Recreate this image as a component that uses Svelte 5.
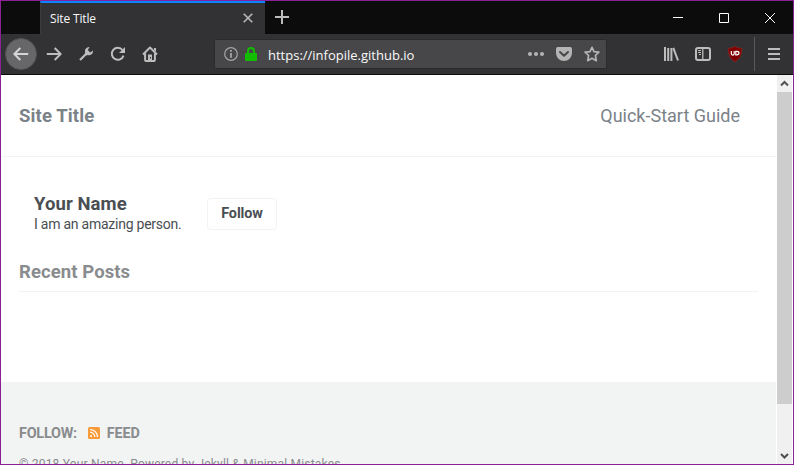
<script>
  const siteTitle = 'Site Title';
  const url = 'https://infopile.github.io';
</script>

<div class="window">
  <div class="tabs">
    <div class="tab"><span>{siteTitle}</span>
      <svg class="close" width="10" height="10" viewBox="0 0 10 10"><path d="M.7.7l8.6 8.6M9.3.7L.7 9.3" stroke="#b8b8b8" stroke-width="1.6" /></svg>
    </div>
    <svg class="plus" width="14" height="14" viewBox="0 0 14 14"><path d="M7 0v14M0 7h14" stroke="#bcbcbc" stroke-width="2" /></svg>
    <div class="controls">
      <svg width="10" height="10" viewBox="0 0 10 10"><path d="M0 4.5h10" stroke="#fff" /></svg>
      <svg width="10" height="10" viewBox="0 0 10 10"><path d="M.5.5h9v9h-9z" fill="none" stroke="#fff" /></svg>
      <svg width="10" height="10" viewBox="0 0 10 10"><path d="M0 0l10 10M10 0L0 10" stroke="#fff" /></svg>
    </div>
  </div>

  <div class="toolbar">
    <div class="back"><svg width="16" height="16" viewBox="0 0 16 16"><path d="M15.2 8H1.5M7.3 2L1.3 8l6 6" /></svg></div>
    <div class="nav">
      <svg width="16" height="16" viewBox="0 0 16 16"><path d="M.8 8h13.7M8.7 2l6 6-6 6" /></svg>
      <svg width="16" height="16" viewBox="0 0 16 16"><path d="M2 14l6.3-6.3" stroke-width="2.2" /><path d="M11.6 1.1A4.2 4.2 0 0 0 7.1 6.5L6.7 8l1.5 1.5 1.4-.5A4.2 4.2 0 0 0 15 4.4l-2.8 2L9.8 4z" fill="#bdbdbd" stroke="none" /></svg>
      <svg width="16" height="16" viewBox="0 0 16 16"><path d="M13.5 9.6A6 6 0 1 1 12.5 4" /><path d="M15 1v6H9z" fill="#bdbdbd" stroke="none" /></svg>
      <svg width="16" height="16" viewBox="0 0 16 16"><path d="M1 8.5l7-7 7 7M3.1 7.5V14a1 1 0 0 0 1 1h7.8a1 1 0 0 0 1-1V7.5" stroke-linejoin="round" /><path d="M12 2h2v4l-2-2zM6 8.5h4V15H6z" fill="#bdbdbd" stroke="none" /><path d="M8.5 11v1.5" stroke="#323234" stroke-width="1" /></svg>
    </div>
    <div class="address">
      <svg width="14" height="14" viewBox="0 0 14 14"><circle cx="7" cy="7" r="6.3" fill="none" stroke="#a5a5a6" stroke-width="1.2" /><path d="M7 6v4.8M7 3v1.8" stroke="#a5a5a6" stroke-width="1.8" /></svg>
      <svg class="lock" width="12" height="14" viewBox="0 0 12 14"><path d="M3 7V4a3 3 0 0 1 6 0v3" fill="none" stroke="#12bc00" stroke-width="2" /><rect y="6" width="12" height="8" rx="1" fill="#12bc00" /></svg>
      <span class="url">{url}</span>
      <svg class="dots" width="16" height="16" viewBox="0 0 16 16" fill="#b4b4b5"><circle cx="2" cy="8" r="2" /><circle cx="8" cy="8" r="2" /><circle cx="14" cy="8" r="2" /></svg>
      <svg class="pocket" width="16" height="16" viewBox="0 0 16 16"><path d="M1.7 1h12.6Q16 1 16 2.7V7A8 8 0 0 1 0 7V2.7Q0 1 1.7 1z" fill="#b4b4b5" /><path d="M4 6l4 3.8L12 6" fill="none" stroke="#474749" stroke-width="2" stroke-linecap="round" stroke-linejoin="round" /></svg>
      <svg class="star" width="16" height="16" viewBox="0 0 16 16"><path d="M8 1.3l2 4.3 4.9.6-3.5 3.3.9 5.2L8 12.3l-4.3 2.4.9-5.2L1.1 6.2 6 5.6z" fill="none" stroke="#b4b4b5" stroke-width="1.7" stroke-linejoin="round" /></svg>
    </div>
    <div class="tools">
      <svg width="16" height="16" viewBox="0 0 16 16"><path d="M2 1v14M5.2 2v13M8.4 2v13" /><path d="M10.3 1.8L15 14.5" /></svg>
      <svg width="16" height="16" viewBox="0 0 16 16"><rect x="1" y="2" width="14" height="12" rx="2" /><path d="M7.8 2v12" stroke-width="1.3" /><path class="thin" d="M3 4.5h3M3 6.5h3M4 8.5h2" /></svg>
      <svg width="16" height="16" viewBox="0 0 16 16"><path class="shield" d="M8 .3c2.2 1.5 4.5 2 6.8 2C14.9 9 13 13 8 15.7 3 13 1.1 9 1.2 2.3 3.5 2.3 5.8 1.8 8 .3z" /><path d="M4.3 5v2.6q0 1.5 1.4 1.5T7.2 7.6V5M8.8 5.4v3.4h1q2.2 0 2.2-1.7t-2.2-1.7z" stroke="#fff" stroke-width="1.2" /></svg>
    </div>
    <div class="menu"><svg width="12" height="12" viewBox="0 0 12 12"><path d="M0 1h12M0 6h12M0 11h12" /></svg></div>
  </div>

  <div class="viewport">
    <div class="page">
      <header><a class="brand" href="#home">{siteTitle}</a><a class="guide" href="#guide">Quick-Start Guide</a></header>
      <main>
        <section class="author">
          <div class="bio"><h3>Your Name</h3><p>I am an amazing person.</p></div>
          <button>Follow</button>
        </section>
        <h2>Recent Posts</h2>
      </main>
      <footer>
        <div class="follow"><span class="label">FOLLOW:</span>
          <svg width="12" height="12" viewBox="0 0 12 12"><rect width="12" height="12" rx="1.5" fill="#fa9b3a" /><g fill="none" stroke="#fff" stroke-width="1.2"><path d="M2 5.2a4.8 4.8 0 0 1 4.8 4.8M2 2.5A7.5 7.5 0 0 1 9.5 10" /></g><circle cx="3" cy="9" r="1" fill="#fff" /></svg>
          <span class="feed">FEED</span></div>
        <div class="copyright">© 2018 Your Name. Powered by Jekyll &amp; Minimal Mistakes.</div>
      </footer>
    </div>
    <div class="scrollbar">
      <svg width="15" height="17" viewBox="0 0 15 17"><path d="M4 10.5L7.5 7l3.5 3.5" /></svg>
      <div class="thumb"></div>
      <svg width="15" height="17" viewBox="0 0 15 17"><path d="M4 7l3.5 3.5L11 7" /></svg>
    </div>
  </div>
</div>

<style>
  :global(body) { margin: 0; overflow: hidden; }
  .window { box-sizing: border-box; width: 794px; height: 465px; border: 1px solid #8a2199; display: flex; flex-direction: column; overflow: hidden; background: #fff; font-family: Roboto, sans-serif; }
  svg { display: block; flex: none; }
  .tabs { height: 33px; flex: none; background: #0c0c0c; display: flex; box-sizing: border-box; }
  .tab { box-sizing: border-box; width: 225px; height: 33px; margin-left: 39px; border-top: 2px solid #0a84ff; border-left: 1px solid #3b3b3d; background: #323234; display: flex; justify-content: space-between; padding: 10px 12px 0 9px; color: #f9f9fa; font: 12px/14px "Open Sans", sans-serif; }
  .tab span { letter-spacing: -.15px; margin-top: -3px; line-height: 17px; }
  .plus { margin: 9px 0 0 10px; }
  .controls { margin: 12px 18px 0 auto; display: flex; gap: 36px; }
  .toolbar { box-sizing: border-box; height: 41px; flex: none; background: #323234; border-bottom: 1px solid #0c0c0d; display: flex; align-items: center; }
  .back, .nav, .tools, .menu { stroke: #bdbdbd; stroke-width: 2; fill: none; }
  .back { box-sizing: border-box; width: 32px; height: 32px; margin-left: 4px; border-radius: 50%; background: #67676a; border: 1px solid #535355; display: grid; place-items: center; stroke: #d5d5d5; }
  .nav { display: flex; gap: 16px; margin-left: 9px; }
  .address { box-sizing: border-box; width: 393px; height: 30px; margin-left: 56px; background: #474749; border: 1px solid #2b2b2d; border-radius: 2px; display: flex; align-items: center; padding: 0 6px 0 9px; }
  .lock { margin: -1px 0 0 7px; }
  .url { margin: 1px 0 0 11px; color: #f9f9fa; font: 13px/20px "Open Sans", sans-serif; white-space: nowrap; }
  .dots { margin-left: auto; }
  .pocket, .star { margin-left: 12px; }
  .tools { display: flex; gap: 16px; margin-left: 56px; }
  .thin { stroke-width: 1; }
  .shield { fill: #800000; stroke: #99302f; stroke-width: .5; }
  .menu { height: 34px; border-left: 1px solid #59595b; margin-left: 11px; padding-left: 13px; display: flex; align-items: center; }
  .viewport { height: 389px; display: flex; }
  .page { width: 775px; height: 389px; overflow: hidden; color: #494e52; }
  header { box-sizing: border-box; height: 82px; border-bottom: 1px solid #f2f3f3; display: flex; justify-content: space-between; align-items: center; padding: 0 36px 0 18px; font-size: 18px; }
  header a { color: #7a8288; text-decoration: none; }
  .brand { font-weight: 700; font-size: 18.5px; letter-spacing: .12px; }
  main { height: 225px; padding: 0 18px; }
  .author { height: 94px; box-sizing: border-box; padding: 36px 0 0 15px; display: flex; align-items: flex-start; }
  h3 { margin: 0; font-size: 18.5px; line-height: 22px; letter-spacing: .08px; }
  .bio { width: 173px; white-space: nowrap; }
  p { margin: 0; font-size: 14px; line-height: 18px; letter-spacing: -.24px; }
  button { margin: 5px 0 0; width: 70px; height: 32px; border: 1px solid #f2f3f3; border-radius: 4px; background: #fff; color: #494e52; font: 700 14.4px Roboto, sans-serif; padding: 0 0 2px; letter-spacing: -.1px; }
  h2 { box-sizing: border-box; height: 41px; margin: 0; padding-top: 10px; border-bottom: 1px solid #f2f3f3; color: #898c8e; font-size: 18.5px; line-height: 22px; letter-spacing: .08px; }
  footer { height: 82px; background: #f2f3f3; padding: 42px 18px 0; color: #898c8e; }
  .follow { display: flex; align-items: center; height: 18px; font-weight: 700; font-size: 14.4px; }
  .follow svg { margin: 0 7px 0 11px; }
  .label { letter-spacing: -.24px; }
  .feed { letter-spacing: -.15px; }
  .copyright { margin-top: 14px; font-size: 12px; line-height: 16px; white-space: nowrap; letter-spacing: .19px; }
  .scrollbar { width: 15px; height: 389px; margin-left: 1px; background: #f0f0f0; display: flex; flex-direction: column; fill: none; stroke: #505050; stroke-width: 2; }
  .thumb { height: 312px; margin-bottom: 43px; background: #cdcdcd; }
</style>
